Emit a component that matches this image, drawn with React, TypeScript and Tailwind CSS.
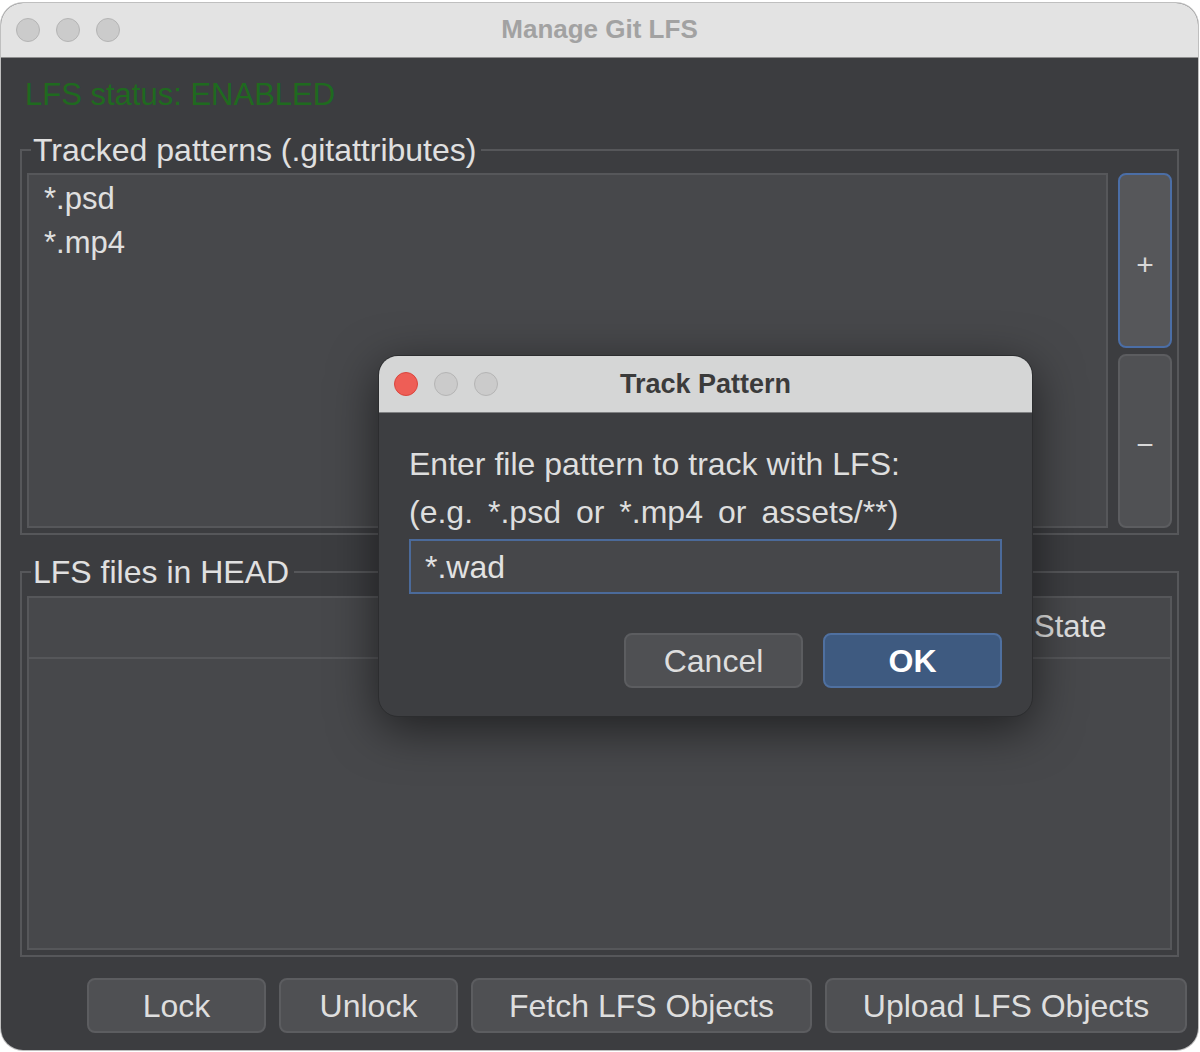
import React from "react";

const FONT = "font-['Liberation_Sans','Helvetica_Neue',Arial,sans-serif]";

function Light({ color }: { color: "red" | "gray" }) {
  return (
    <span
      className={`block h-[24px] w-[24px] rounded-full border ${
        color === "red" ? "border-[#d9463e] bg-[#ee5e56]" : "border-[#b4b4b4] bg-[#cbcbcb]"
      }`}
    />
  );
}

function FooterButton({ label, width }: { label: string; width: string }) {
  return (
    <button
      className={`${width} flex h-[55px] items-center justify-center rounded-[8px] border-2 border-[#5c5d60] bg-[#4f5053] text-[32px] leading-none text-[#dedede]`}
    >
      {label}
    </button>
  );
}

function TrackPatternDialog() {
  return (
    <div className="absolute left-[378px] top-[355px] flex h-[362px] w-[655px] flex-col overflow-hidden rounded-[20px] border border-[#2c2d2f] bg-[#3d3e41] shadow-[0_12px_48px_rgba(0,0,0,0.55)]">
      {/* title bar */}
      <div className="relative flex h-[57px] shrink-0 items-center gap-[16px] border-b border-[#7f8082] bg-[#d5d6d6] pl-[15px]">
        <Light color="red" />
        <Light color="gray" />
        <Light color="gray" />
        <div className="absolute inset-0 flex items-center justify-center text-[27px] font-bold text-[#3b3b3b]">
          Track Pattern
        </div>
      </div>

      <div className="flex flex-1 flex-col px-[30px] pt-[27px]">
        <p className="whitespace-pre text-[32px] leading-[48px] text-[#dedede]">
          Enter file pattern to track with LFS:
        </p>
        <p className="whitespace-pre text-[32px] leading-[48px] text-[#dedede] [word-spacing:-1.4px]">
          (e.g.  *.psd  or  *.mp4  or  assets/**)
        </p>
        <div className="mt-[3px] flex h-[55px] items-center border-2 border-[#4b6a9a] bg-[#46474a] pl-[14px] text-[32px] leading-none text-[#e2e2e2]">
          *.wad
        </div>
        <div className="mt-[39px] flex justify-end gap-[20px]">
          <button className="flex h-[55px] w-[179px] items-center justify-center rounded-[8px] border-2 border-[#5c5d60] bg-[#4f5053] text-[32px] leading-none text-[#dedede]">
            Cancel
          </button>
          <button className="flex h-[55px] w-[179px] items-center justify-center rounded-[8px] border-2 border-[#4f70a0] bg-[#3e5a80] text-[32px] font-bold leading-none text-white">
            OK
          </button>
        </div>
      </div>
    </div>
  );
}

export default function App() {
  return (
    <div className={`relative h-[1052px] w-[1200px] overflow-hidden bg-white ${FONT}`}>
      <div className="ml-[1px] mt-[3px] flex h-[1047px] w-[1197px] flex-col overflow-hidden rounded-[22px] bg-[#3c3d40] shadow-[0_0_0_1px_rgba(0,0,0,0.25)]">
        {/* window title bar */}
        <div className="relative flex h-[55px] shrink-0 items-center gap-[16px] border-b border-[#8f8f8f] bg-[#e3e3e3] pl-[15px]">
          <Light color="gray" />
          <Light color="gray" />
          <Light color="gray" />
          <div className="absolute inset-0 flex items-center justify-center pb-[2px] text-[26px] font-bold text-[#a2a2a2]">
            Manage Git LFS
          </div>
        </div>

        <div className="flex flex-1 flex-col px-[19px]">
          <div className="mt-[19px] pl-[5px] text-[31px] leading-[36px] text-[#1f6a1f]">LFS status: ENABLED</div>

          {/* Tracked patterns */}
          <fieldset className="mt-[19px] border-2 border-[#56575a] px-[5px] pb-[5px] pt-[5px]">
            <legend className="ml-[4px] pl-[2px] pr-[5px] text-[32px] leading-[36px] text-[#e0e0e0]">
              Tracked patterns (.gitattributes)
            </legend>
            <div className="flex h-[355px] gap-[10px]">
              <div className="flex-1 border-2 border-[#56575a] bg-[#47484b] pt-[2px]">
                {["*.psd", "*.mp4"].map((p) => (
                  <div key={p} className="flex h-[44px] items-center pl-[15px] text-[31px] text-[#e0e0e0]">
                    {p}
                  </div>
                ))}
              </div>
              <div className="flex w-[54px] flex-col gap-[6px]">
                <button className="flex flex-1 items-center justify-center rounded-[8px] border-2 border-[#4b6ea6] bg-[#56575a] pt-[8px] text-[30px] font-light text-[#d8d8d8]">
                  +
                </button>
                <button className="flex flex-1 items-center justify-center rounded-[8px] border-2 border-[#5c5d60] bg-[#505154] pt-[8px] text-[30px] text-[#d8d8d8]">
                  −
                </button>
              </div>
            </div>
          </fieldset>

          {/* LFS files */}
          <fieldset className="mt-[19px] border-2 border-[#56575a] px-[5px] pb-[5px] pt-[6px]">
            <legend className="ml-[4px] pl-[2px] pr-[5px] text-[32px] leading-[36px] text-[#e0e0e0]">
              LFS files in HEAD
            </legend>
            <div className="flex h-[354px] flex-col border-2 border-[#56575a] bg-[#47484b]">
              <div className="flex h-[61px] border-b-2 border-[#56575a]">
                <div className="flex-1" />
                <div className="flex w-[140px] items-center pl-[4px] text-[31px] text-[#e0e0e0]">State</div>
              </div>
              <div className="flex-1" />
            </div>
          </fieldset>

          <div className="-mr-[8px] mt-[21px] flex justify-end gap-[13px]">
            <FooterButton label="Lock" width="w-[179px]" />
            <FooterButton label="Unlock" width="w-[179px]" />
            <FooterButton label="Fetch LFS Objects" width="w-[341px]" />
            <FooterButton label="Upload LFS Objects" width="w-[362px]" />
          </div>
        </div>
      </div>

      <TrackPatternDialog />
    </div>
  );
}
